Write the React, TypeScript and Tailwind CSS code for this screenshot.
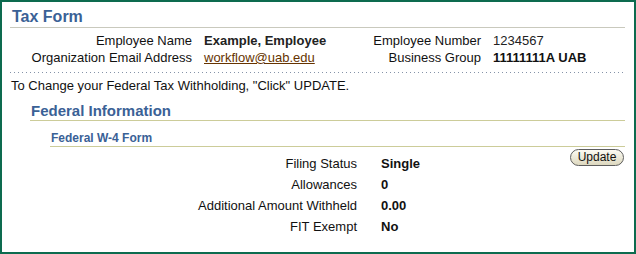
import React from 'react'

const font = { fontFamily: '"Liberation Sans", Arial, sans-serif' }

function Row({ label, value }: { label: string; value: string }) {
  return (
    <>
      <div className="text-right whitespace-nowrap">{label}</div>
      <div className="font-bold whitespace-nowrap">{value}</div>
    </>
  )
}

export default function App() {
  return (
    <div
      className="w-[636px] h-[254px] border-2 border-[#0d6b4f] bg-white text-[13px] text-[#111] overflow-hidden"
      style={font}
    >
      <div className="pl-[8px] pr-[9px]">
        {/* Title */}
        <div className="pt-[5px] border-b border-[#c9c9bd]">
          <h1 className="pl-[2px] text-[16px] leading-[20px] font-bold text-[#3a6196]">Tax Form</h1>
        </div>

        {/* Employee header */}
        <div className="mt-[4px] grid grid-cols-[182px_155px_110px_1fr] gap-x-3 leading-[17px]">
          <div className="text-right whitespace-nowrap">Employee Name</div>
          <div className="font-bold whitespace-nowrap text-[#222]">Example, Employee</div>
          <div className="text-right whitespace-nowrap">Employee Number</div>
          <div className="whitespace-nowrap text-[#222]">1234567</div>
          <div className="text-right whitespace-nowrap">Organization Email Address</div>
          <div className="whitespace-nowrap">
            <a href="#" className="underline text-[#663300]">workflow@uab.edu</a>
          </div>
          <div className="text-right whitespace-nowrap">Business Group</div>
          <div className="font-bold whitespace-nowrap">11111111A UAB</div>
        </div>

        {/* Dotted separator */}
        <div className="mt-[6px] h-px bg-[repeating-linear-gradient(to_right,#8593a8_0_1px,transparent_1px_4px)]" />

        <p className="mt-[4px] pl-px leading-[17px]">To Change your Federal Tax Withholding, "Click" UPDATE.</p>

        {/* Federal Information */}
        <div className="ml-[20px] mt-[8px]">
          <div className="border-b border-[#cccc99]">
            <h2 className="pl-px text-[15px] leading-[18px] font-bold text-[#3a6196]">Federal Information</h2>
          </div>

          <div className="ml-[20px] mt-[10px]">
            <div className="border-b border-[#cccc99]">
              <h3 className="pl-px text-[12px] leading-[15px] font-bold text-[#3a6196]">Federal W-4 Form</h3>
            </div>

            <div className="mt-[2px] flex items-start justify-between">
              <div className="pt-[4px] grid grid-cols-[307px_auto] gap-x-6 leading-[21px]">
                <Row label="Filing Status" value="Single" />
                <Row label="Allowances" value="0" />
                <Row label="Additional Amount Withheld" value="0.00" />
                <Row label="FIT Exempt" value="No" />
              </div>
              <button className="mr-px w-[54px] h-[17px] rounded-full border border-[#5e5e5e] bg-gradient-to-b from-[#fcfbf3] to-[#ddd8bf] text-[12px] leading-[15px] text-[#111]">
                Update
              </button>
            </div>
          </div>
        </div>
      </div>
    </div>
  )
}
